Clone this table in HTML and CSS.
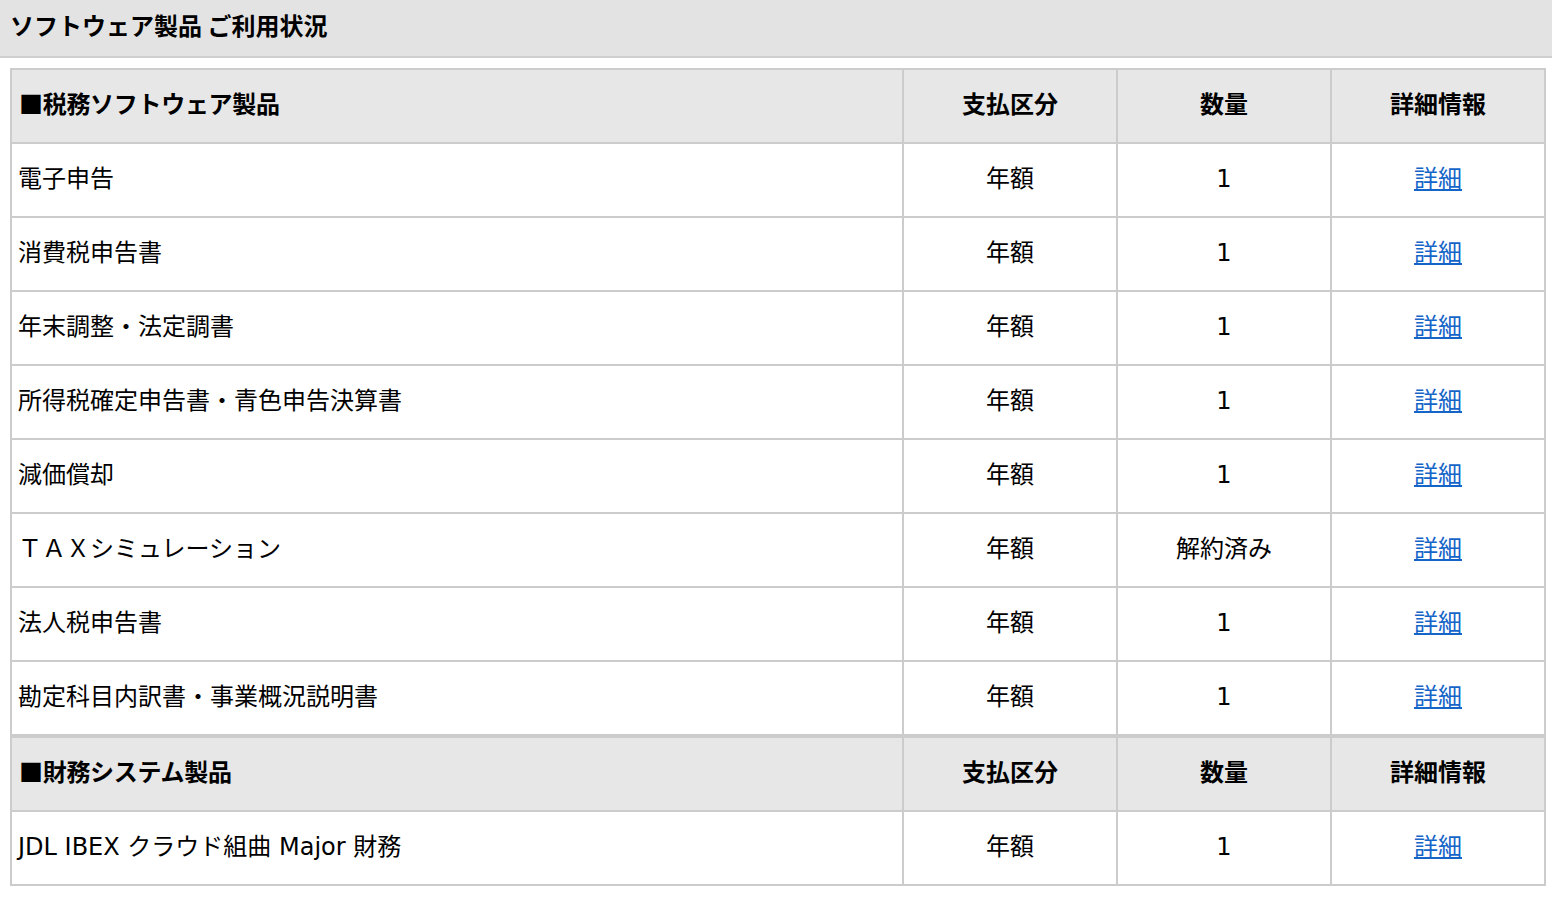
FILE: index.html
```html
<!DOCTYPE html>
<html lang="ja">
<head>
<meta charset="utf-8">
<title>ソフトウェア製品 ご利用状況</title>
<link rel="stylesheet" href="styles.css">
</head>
<body>
<div class="page-title">ソフトウェア製品 ご利用状況</div>
<div class="content">
<table class="usage">
  <tbody>
    <tr class="head">
      <th class="c-name">■税務ソフトウェア製品</th>
      <th class="c-pay">支払区分</th>
      <th class="c-qty">数量</th>
      <th class="c-info">詳細情報</th>
    </tr>
    <tr><td class="name">電子申告</td><td>年額</td><td>1</td><td><a href="#">詳細</a></td></tr>
    <tr><td class="name">消費税申告書</td><td>年額</td><td>1</td><td><a href="#">詳細</a></td></tr>
    <tr><td class="name">年末調整・法定調書</td><td>年額</td><td>1</td><td><a href="#">詳細</a></td></tr>
    <tr><td class="name">所得税確定申告書・青色申告決算書</td><td>年額</td><td>1</td><td><a href="#">詳細</a></td></tr>
    <tr><td class="name">減価償却</td><td>年額</td><td>1</td><td><a href="#">詳細</a></td></tr>
    <tr><td class="name">ＴＡＸシミュレーション</td><td>年額</td><td>解約済み</td><td><a href="#">詳細</a></td></tr>
    <tr><td class="name">法人税申告書</td><td>年額</td><td>1</td><td><a href="#">詳細</a></td></tr>
    <tr><td class="name">勘定科目内訳書・事業概況説明書</td><td>年額</td><td>1</td><td><a href="#">詳細</a></td></tr>
    <tr class="head section">
      <th>■財務システム製品</th>
      <th>支払区分</th>
      <th>数量</th>
      <th>詳細情報</th>
    </tr>
    <tr><td class="name">JDL IBEX クラウド組曲 Major 財務</td><td>年額</td><td>1</td><td><a href="#">詳細</a></td></tr>
  </tbody>
</table>
</div>
</body>
</html>
```
FILE: styles.css
```css
html, body {
  margin: 0;
  padding: 0;
  background: #ffffff;
}
body {
  font-family: "DejaVu Sans", "Noto Sans CJK JP", sans-serif;
  color: #000;
  font-size: 24px;
}
.page-title {
  height: 58px;
  box-sizing: border-box;
  padding: 9px 0 0 10px;
  line-height: 32px;
  background: #e4e3e3;
  border-bottom: 2px solid #cfcfcf;
  font-weight: bold;
  font-size: 24px;
  font-family: "Noto Sans CJK JP", sans-serif;
}
.content {
  padding: 10px 0 0 10px;
}
.usage {
  table-layout: fixed;
  width: 1536px;
  border-collapse: separate;
  border-spacing: 0;
  border-top: 2px solid #cccccc;
  border-left: 2px solid #cccccc;
}
.usage th, .usage td {
  box-sizing: border-box;
  height: 74px;
  border-right: 2px solid #cccccc;
  border-bottom: 2px solid #cccccc;
  padding: 0 6px 3px;
  text-align: center;
  vertical-align: middle;
  line-height: 32px;
  font-size: 24px;
}
.usage th {
  background: #e7e7e7;
  font-weight: bold;
  font-family: "Noto Sans CJK JP", sans-serif;
  padding-bottom: 6px;
}
.usage th:first-child, .usage td.name {
  text-align: left;
}
.usage th:first-child {
  padding-left: 7px;
  letter-spacing: -0.3px;
}
.c-name { width: 892px; }
.c-pay, .c-qty, .c-info { width: 214px; }
.usage tr.section th {
  height: 76px;
  border-top: 2px solid #cccccc;
}
.usage a {
  color: #1565c8;
  text-decoration: underline;
}
```
